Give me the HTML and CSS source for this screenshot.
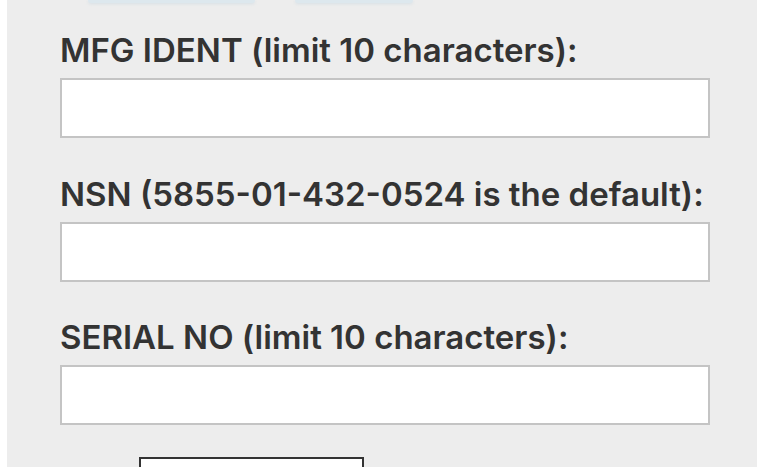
FILE: index.html
```html
<!DOCTYPE html>
<html lang="en">
<head>
    <meta charset="UTF-8">
    <meta name="viewport" content="width=device-width, initial-scale=1.0">
    <title>Label Form</title>
    <link rel="stylesheet" href="styles.css">
</head>
<body>
    <div class="panel">
        <div class="top-actions">
            <span class="tab tab-wide"></span>
            <span class="tab tab-narrow"></span>
        </div>
        <form class="label-form">
            <div class="field">
                <label for="mfg">MFG IDENT (limit 10 characters):</label>
                <input type="text" id="mfg" maxlength="10">
            </div>
            <div class="field">
                <label for="nsn">NSN (5855-01-432-0524 is the default):</label>
                <input type="text" id="nsn">
            </div>
            <div class="field">
                <label for="serial">SERIAL NO (limit 10 characters):</label>
                <input type="text" id="serial" maxlength="10">
            </div>
            <div class="actions">
                <button type="button" class="btn"></button>
            </div>
        </form>
    </div>
</body>
</html>
```

FILE: styles.css
```css
* {
    margin: 0;
    padding: 0;
    box-sizing: border-box;
}

body {
    background: #fff;
    font-family: Inter, 'Open Sans', sans-serif;
    color: #333;
    overflow: hidden;
}

.panel {
    margin-left: 7px;
    width: 750px;
    height: 467px;
    background: #ededed;
    padding: 0 47px 0 53px;
    overflow: hidden;
}

.top-actions {
    display: flex;
    height: 3px;
    margin-bottom: 27px;
}

.tab {
    display: block;
    height: 3px;
    background: #dde8ee;
    border-radius: 0 0 3px 3px;
    box-shadow: 0 1px 3px rgba(200, 215, 225, 0.6);
}

.tab-wide {
    width: 167px;
    margin-left: 28px;
}

.tab-narrow {
    width: 118px;
    margin-left: 40px;
}

.field {
    margin-bottom: 35.5px;
}

.field label {
    display: block;
    font-size: 33px;
    font-weight: 600;
    line-height: 40px;
    margin-bottom: 8px;
}

.field input {
    display: block;
    width: 650px;
    height: 60px;
    border: 2px solid #c4c4c4;
    background: #fff;
    font-size: 24px;
    padding: 0 12px;
    outline: none;
}

.actions {
    padding-left: 79px;
    margin-top: -4px;
}

.btn {
    display: block;
    width: 225px;
    height: 50px;
    border: 2px solid #333;
    background: #fff;
    cursor: pointer;
}
```
